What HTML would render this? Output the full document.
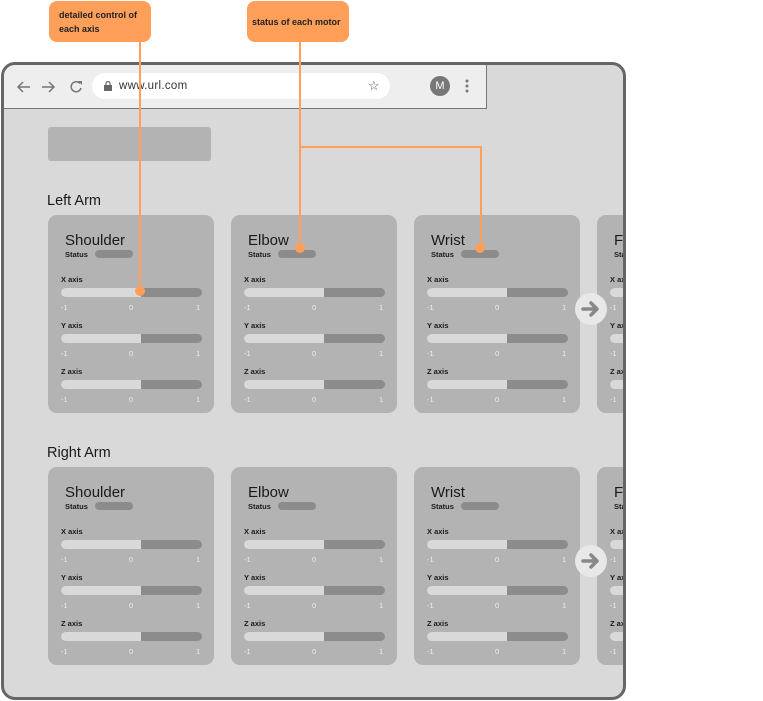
<!DOCTYPE html>
<html><head><meta charset="utf-8"><style>
*{margin:0;padding:0;box-sizing:border-box}
body{width:763px;height:701px;background:#fff;position:relative;overflow:hidden;font-family:"Liberation Sans",Arial,sans-serif;color:#1a1a1a}
.abs{position:absolute}
.frame{left:1px;top:62px;width:625px;height:638px;border:3px solid #666;border-radius:14px;background:#d9d9d9;overflow:hidden}
.tb{left:0;top:0;width:483px;height:44px;background:#eeeeee;border-right:1px solid #777;border-bottom:1px solid #777}
.url{left:88px;top:8px;width:298px;height:26px;background:#fff;border-radius:13px;font-size:11.5px;line-height:26px;padding-left:27px;color:#333;letter-spacing:.3px}
.card{width:166px;height:198px;background:#b3b3b3;border-radius:9px;overflow:hidden}
.t{left:17px;top:17px;font-size:15px;white-space:nowrap}
.st{left:17px;top:35px;font-size:7.5px;font-weight:bold}
.pill{left:47px;top:35px;width:38px;height:8px;background:#8c8c8c;border-radius:4px}
.lab{left:13px;font-size:7.5px;font-weight:bold}
.bar{left:13px;width:141px;height:9px;border-radius:5px;background:#8c8c8c;overflow:hidden}
.bar i{position:absolute;left:0;top:0;width:80px;height:9px;background:#d9d9d9}
.tk{font-size:7.5px;color:#eee}
.arrow{width:32px;height:32px;border-radius:16px;background:#e8e8e8}
.h{font-size:14.5px;left:43px}
.call{background:#ff9f5a;border-radius:8px;font-size:9px;font-weight:bold;color:#222;line-height:14px}
.ln{background:#ff9f5a}
.dot{width:10px;height:10px;border-radius:5px;background:#ff9f5a}
</style></head><body>
<div class="abs frame">
 <div class="abs tb">
  <svg class="abs" style="left:10px;top:12px" width="80" height="20" viewBox="0 0 80 20"><g stroke="#777" stroke-width="1.5" fill="none"><path d="M4 10h12M9 5l-5 5 5 5"/><path d="M28 10h12M35 5l5 5-5 5"/><path d="M66 6.5A5 5 0 1 0 67 11"/></g><path d="M64 4h4v4z" fill="#777"/></svg>
  <div class="abs url">www.url.com<svg class="abs" style="left:12px;top:8px" width="8" height="10"><rect x="0" y="4" width="8" height="6" fill="#666"/><path d="M2 4V2.5a2 2 0 0 1 4 0V4" stroke="#666" fill="none" stroke-width="1.2"/></svg>
   <span class="abs" style="right:10px;top:0;font-size:13px;color:#555">☆</span></div>
  <div class="abs" style="left:426px;top:11px;width:20px;height:20px;border-radius:10px;background:#777;color:#fff;font-size:11px;text-align:center;line-height:20px">M</div>
  <svg class="abs" style="left:461px;top:14px" width="4" height="14"><circle cx="2" cy="2" r="1.5" fill="#777"/><circle cx="2" cy="7" r="1.5" fill="#777"/><circle cx="2" cy="12" r="1.5" fill="#777"/></svg>
 </div>
 <div class="abs" style="left:44px;top:62px;width:163px;height:34px;background:#b3b3b3;border-radius:3px"></div>
 <div class="abs h" style="top:128px">Left Arm</div>
 <div class="abs h" style="top:380px">Right Arm</div>
 <div id="cards"></div>
</div>
<div class="abs call" style="left:49px;top:1px;width:102px;height:41px;padding:7px 0 0 10px">detailed control of<br>each axis</div>
<div class="abs call" style="left:247px;top:1px;width:102px;height:41px;padding:14px 0 0 5px">status of each motor</div>
<div class="abs ln" style="left:139px;top:42px;width:1.5px;height:249px"></div>
<div class="abs dot" style="left:135px;top:286px"></div>
<div class="abs ln" style="left:299px;top:42px;width:1.5px;height:206px"></div>
<div class="abs ln" style="left:299px;top:146px;width:182px;height:1.5px"></div>
<div class="abs ln" style="left:480px;top:146px;width:1.5px;height:102px"></div>
<div class="abs dot" style="left:295px;top:243px"></div>
<div class="abs dot" style="left:475px;top:243px"></div>
<script>
var names=["Shoulder","Elbow","Wrist","Finger"],h="";
[150,402].forEach(function(top){
 names.forEach(function(n,i){
  var l=44+i*183;
  h+='<div class="abs card" style="left:'+l+'px;top:'+top+'px"><div class="abs t">'+n+'</div><div class="abs st">Status</div><div class="abs pill"></div>';
  ["X","Y","Z"].forEach(function(a,j){var y=60+j*46;
   h+='<div class="abs lab" style="top:'+y+'px">'+a+' axis</div><div class="abs bar" style="top:'+(y+13)+'px"><i></i></div>'+
   '<div class="abs tk" style="left:13px;top:'+(y+28)+'px">-1</div><div class="abs tk" style="left:81px;top:'+(y+28)+'px">0</div><div class="abs tk" style="left:148px;top:'+(y+28)+'px">1</div>';});
  h+='</div>';
 });
 h+='<div class="abs arrow" style="left:571px;top:'+(top+78)+'px"><svg width="32" height="32"><path d="M8 16h14M16 10l6 6-6 6" stroke="#888" stroke-width="3.5" fill="none" stroke-linecap="round" stroke-linejoin="round"/></svg></div>';
});
document.getElementById("cards").innerHTML=h;
</script>
</body></html>
